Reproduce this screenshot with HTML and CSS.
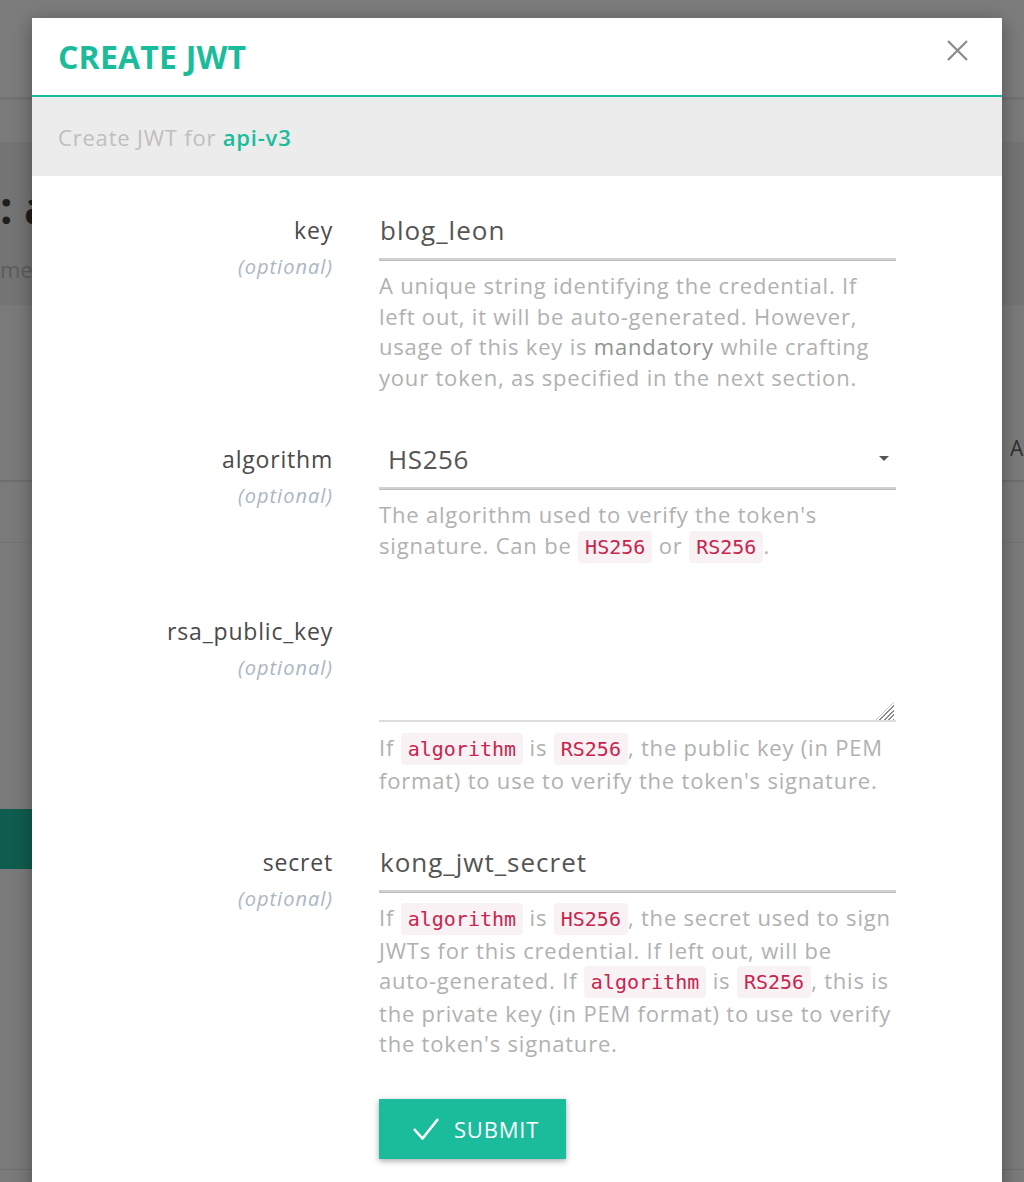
FILE: index.html
```html
<!DOCTYPE html>
<html lang="en">
<head>
<meta charset="utf-8">
<title>Create JWT</title>
<link rel="stylesheet" href="styles.css">
</head>
<body>
<div class="page">
  <header class="topnav"></header>
  <section class="hero">
    <h1 class="page-title">: a</h1>
    <p class="page-sub">me</p>
  </section>
  <div class="table-head"><span></span><span class="th">A</span></div>
  <div class="table-row"></div>
  <div class="page-actions"><span class="btn-dark"></span></div>
  <div class="page-foot"></div>
</div>

<div class="modal">
  <div class="modal-header">
    <h2 class="modal-title">CREATE JWT</h2>
    <button class="close" type="button" aria-label="Close">
      <svg width="21" height="21" viewBox="0 0 21 21"><path d="M1 1 L20 20 M20 1 L1 20" stroke="#8a8a8a" stroke-width="2.2" fill="none"/></svg>
    </button>
  </div>
  <div class="modal-sub">Create JWT for&nbsp;<strong>api-v3</strong></div>

  <form class="modal-body">
    <div class="field">
      <div class="field-label"><span class="label-name">key</span><span class="label-opt">(optional)</span></div>
      <div class="field-control">
        <input class="input" type="text" value="blog_leon">
        <p class="help">A unique string identifying the credential. If left&nbsp;out, it will be <span class="nowrap">auto-generated.</span> However, usage of this key is <strong>mandatory</strong> while crafting your token, as specified in the next section.</p>
      </div>
    </div>

    <div class="field">
      <div class="field-label"><span class="label-name">algorithm</span><span class="label-opt">(optional)</span></div>
      <div class="field-control">
        <div class="select-wrap">
          <select class="input select"><option>HS256</option><option>RS256</option></select>
        </div>
        <p class="help">The algorithm used to verify the token's signature. Can be <code>HS256</code> or <code>RS256</code>.</p>
      </div>
    </div>

    <div class="field field-rsa">
      <div class="field-label"><span class="label-name">rsa_public_key</span><span class="label-opt">(optional)</span></div>
      <div class="field-control">
        <div class="textarea-wrap">
          <textarea class="textarea"></textarea>
        </div>
        <p class="help">If <code>algorithm</code> is <code>RS256</code>, the public key (in PEM format) to use to verify the token's signature.</p>
      </div>
    </div>

    <div class="field">
      <div class="field-label"><span class="label-name">secret</span><span class="label-opt">(optional)</span></div>
      <div class="field-control">
        <input class="input" type="text" value="kong_jwt_secret">
        <p class="help">If <code>algorithm</code> is <code>HS256</code>, the secret used to sign JWTs for this credential. If left out, will be <span class="nowrap">auto-generated.</span> If <code>algorithm</code> is <code>RS256</code>, this is the&nbsp;private key (in PEM format) to use to verify the token's signature.</p>
      </div>
    </div>

    <div class="field actions">
      <span></span>
      <div class="field-control">
        <button class="btn-submit" type="button">
          <svg width="26" height="22" viewBox="0 0 26 22"><path d="M1 11 L9.5 20.5 L25 1" stroke="#ffffff" stroke-width="2.6" fill="none"/></svg>
          <span>SUBMIT</span>
        </button>
      </div>
    </div>
  </form>
</div>
</body>
</html>
```

FILE: styles.css
```css
* { box-sizing: border-box; }

html, body {
  margin: 0;
  height: 1182px;
  overflow: hidden;
}

body {
  position: relative;
  background: #7a7a7a;
  font-family: "Open Sans", "DejaVu Sans", sans-serif;
}

/* ---------- page behind the overlay ---------- */
.topnav {
  height: 100px;
  background: #7c7c7c;
  border-bottom: 3px solid #727272;
}

.hero {
  margin-top: 42px;
  height: 163px;
  padding-top: 39px;
  background: #747474;
}

.page-title {
  margin: 0;
  font-size: 44px;
  line-height: 52px;
  font-weight: 700;
  color: #1e1e1e;
}

.page-sub {
  margin: 21px 0 0;
  font-size: 22px;
  line-height: 30px;
  color: #5c5c5c;
}

.table-head {
  height: 177px;
  padding-top: 128px;
  display: grid;
  grid-template-columns: 1010px auto;
  border-bottom: 2px solid #6e6e6e;
}

.th {
  font-size: 21px;
  line-height: 30px;
  color: #2e2e2e;
  white-space: nowrap;
}

.table-row {
  height: 61px;
  border-bottom: 1px solid #737373;
}

.page-actions {
  padding-top: 266px;
}

.btn-dark {
  display: block;
  width: 60px;
  height: 60px;
  background: #0f5d4f;
}

.page-foot {
  margin-top: 300px;
  border-top: 1px solid #6f6f6f;
}

/* ---------- modal ---------- */
.modal {
  position: absolute;
  left: 32px;
  top: 18px;
  width: 970px;
  height: 1200px;
  background: #ffffff;
  box-shadow: 0 4px 18px rgba(0, 0, 0, 0.35);
}

.modal-header {
  height: 79px;
  display: flex;
  justify-content: space-between;
  align-items: flex-start;
  padding: 0 34px 0 26px;
  border-bottom: 2px solid #1abc9c;
}

.modal-title {
  margin: 0;
  font-size: 32px;
  line-height: 77px;
  font-weight: 700;
  color: #1abc9c;
  letter-spacing: 0.2px;
}

.close {
  margin-top: 22px;
  width: 21px;
  height: 21px;
  padding: 0;
  border: 0;
  background: none;
  display: block;
}

.close svg { display: block; }

.modal-sub {
  height: 79px;
  display: flex;
  align-items: center;
  padding-left: 26px;
  background: #ececec;
  font-size: 22px;
  color: #bfbfbf;
  letter-spacing: 0.8px;
}

.modal-sub strong {
  color: #1abc9c;
  font-weight: 600;
}

.modal-body {
  padding-top: 39px;
  display: flex;
  flex-direction: column;
  gap: 52px;
}

.field {
  display: grid;
  grid-template-columns: 301px 517px;
  column-gap: 46px;
}

.field-rsa {
  margin-top: 2px;
}

.field-label {
  text-align: right;
}

.label-name {
  display: block;
  font-size: 23px;
  line-height: 30px;
  color: #4a4a4a;
  letter-spacing: 0.8px;
}

.label-opt {
  display: block;
  margin-top: 7px;
  font-size: 20px;
  line-height: 30px;
  font-style: italic;
  color: #aab6c2;
  letter-spacing: 1px;
}

.input {
  display: block;
  width: 100%;
  height: 45px;
  margin: 0;
  padding: 0 0 13px 1px;
  border: 0;
  border-bottom: 2px solid #d1d1d1;
  border-radius: 0;
  box-shadow: 0 1px 0 #bdbdbd;
  background: transparent;
  font-family: "Open Sans", "DejaVu Sans", sans-serif;
  font-size: 26px;
  line-height: 30px;
  color: #555555;
  letter-spacing: 1px;
  outline: none;
}

.select-wrap {
  position: relative;
}

.select {
  -webkit-appearance: none;
  appearance: none;
  padding-left: 9px;
  letter-spacing: 0.6px;
}

.select-wrap::after {
  content: "";
  position: absolute;
  right: 7px;
  top: 12px;
  border-left: 5px solid transparent;
  border-right: 5px solid transparent;
  border-top: 5px solid #555555;
}

.textarea-wrap {
  position: relative;
}

.textarea {
  display: block;
  width: 100%;
  height: 106px;
  margin: 0;
  padding: 0;
  border: 0;
  border-bottom: 2px solid #dcdcdc;
  resize: none;
  outline: none;
  background: transparent;
}

.textarea-wrap::after {
  content: "";
  position: absolute;
  right: 2px;
  bottom: 2px;
  width: 18px;
  height: 18px;
  background: repeating-linear-gradient(135deg, transparent 0 2px, #8c8c8c 2px 3.2px);
  clip-path: polygon(100% 0, 100% 100%, 0 100%);
}

.help {
  margin: 10px 0 0;
  font-size: 22px;
  line-height: 30.5px;
  color: #b1b1b1;
  letter-spacing: 0.8px;
}

.help strong {
  font-weight: 400;
  color: #929292;
}

.nowrap {
  white-space: nowrap;
}

code {
  font-family: "DejaVu Sans Mono", "Liberation Mono", monospace;
  font-size: 20px;
  padding: 4px 7px;
  border-radius: 4px;
  color: #c7254e;
  background: #f9f2f4;
  letter-spacing: 0;
}

.actions {
  margin-top: -12px;
}

.btn-submit {
  width: 187px;
  height: 60px;
  display: flex;
  align-items: center;
  gap: 15px;
  padding: 0 0 0 34px;
  border: 0;
  background: #1abc9c;
  color: #ffffff;
  box-shadow: 0 2px 6px rgba(0, 0, 0, 0.35);
  font-family: "Open Sans", "DejaVu Sans", sans-serif;
  font-size: 22px;
  letter-spacing: 0.8px;
}

.btn-submit svg { display: block; }
```
